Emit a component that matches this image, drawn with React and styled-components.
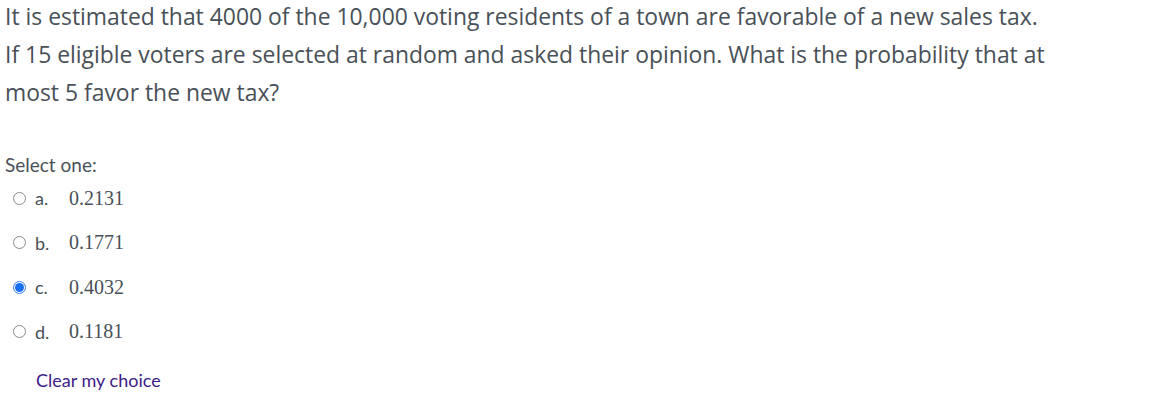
import * as React from "react";
import styled, {createGlobalStyle} from 'styled-components';

const GlobalStyles = createGlobalStyle`
  body {
    margin: 0;
    background: #ffffff;
    font-family: Lato, "Open Sans", sans-serif;
    color: #495057;
  }
`;

const Question = styled.div`
  padding: 0 0 0 5px;
`;

const Prompt = styled.p`
  margin: 0;
  font-family: "Open Sans", Lato, sans-serif;
  font-size: 22.9px;
  line-height: 38px;
  margin-top: -2px;
  width: 1150px;
`;

const Answer = styled.div`
  margin-top: 41px;
`;

const Label = styled.div`
  font-size: 19px;
  line-height: 24px;
  color: #495057;
`;

const Options = styled.div`
  display: flex;
  flex-direction: column;
  margin-top: -1px;
  padding-left: 8px;
`;

const Option = styled.label`
  display: flex;
  align-items: center;
  height: 44.5px;
  font-size: 18px;
`;

const Radio = styled.span`
  box-sizing: border-box;
  width: 13px;
  height: 13px;
  border-radius: 50%;
  border: 1px solid ${({checked}) => (checked ? '#3a7bef' : '#8a8a8a')};
  display: inline-flex;
  align-items: center;
  justify-content: center;
  margin-right: 9px;
  &::after {
    content: '';
    display: ${({checked}) => (checked ? 'block' : 'none')};
    width: 9px;
    height: 9px;
    border-radius: 50%;
    background: #1a6ff0;
  }
`;

const Letter = styled.span`
  width: 34px;
  color: #495057;
`;

const Value = styled.span`
  font-family: "Liberation Serif", serif;
  font-size: 20px;
  color: #495057;
`;

const Clear = styled.a`
  display: inline-block;
  margin-top: 15px;
  margin-left: 31px;
  font-size: 18px;
  color: #3d1a86;
  text-decoration: none;
`;

const options = [
    {letter: 'a.', value: '0.2131'},
    {letter: 'b.', value: '0.1771'},
    {letter: 'c.', value: '0.4032', checked: true},
    {letter: 'd.', value: '0.1181'},
];

const App = () => (
    <>
        <GlobalStyles/>
        <Question>
            <Prompt>
                It is estimated that 4000 of the 10,000 voting residents of a town are favorable of a new sales tax.<br/>
                If 15 eligible voters are selected at random and asked their opinion. What is the probability that at<br/>
                most 5 favor the new tax?
            </Prompt>
            <Answer>
                <Label>Select one:</Label>
                <Options>
                    {options.map((o) => (
                        <Option key={o.letter}>
                            <Radio checked={o.checked}/>
                            <Letter>{o.letter}</Letter>
                            <Value>{o.value}</Value>
                        </Option>
                    ))}
                </Options>
                <Clear href="#">Clear my choice</Clear>
            </Answer>
        </Question>
    </>
);

export default App;
